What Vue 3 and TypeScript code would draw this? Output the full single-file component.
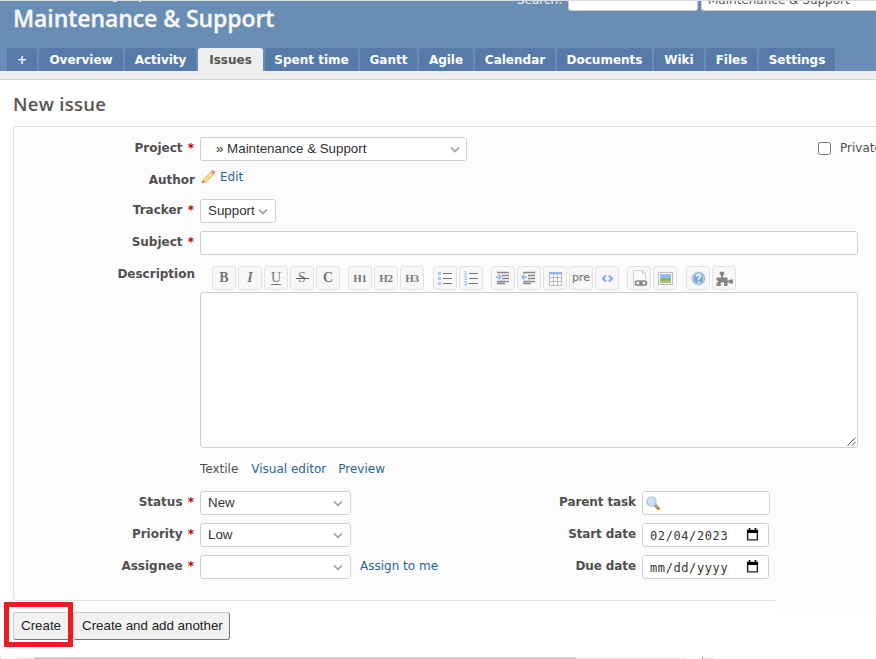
<script setup lang="ts">
interface Tab { label: string; width: number; active?: boolean }
interface Tool { text?: string; cls?: string; icon?: string; title: string }
interface SelectField { label: string; value: string }

const tabs: Tab[] = [
  { label: '+', width: 30 },
  { label: 'Overview', width: 84 },
  { label: 'Activity', width: 71 },
  { label: 'Issues', width: 65, active: true },
  { label: 'Spent time', width: 93 },
  { label: 'Gantt', width: 57 },
  { label: 'Agile', width: 54 },
  { label: 'Calendar', width: 80 },
  { label: 'Documents', width: 95 },
  { label: 'Wiki', width: 50 },
  { label: 'Files', width: 51 },
  { label: 'Settings', width: 76 },
]

const bullets = '<path d="M7 4.5h9M7 9.5h9M7 14.5h9" stroke="#777"/>'
const textLines = (arrow: string) =>
  '<path d="M3 3.5h12M8 6.5h7M8 9.5h7M3 12.500h12M3 14.500h8" stroke="#888" stroke-width="1.300"/><path d="' + arrow + '" stroke="#8fb7f0" stroke-width="1.600" fill="none"/>'

const icons: Record<string, string> = {
  ul: '<g fill="#a9c6f5"><circle cx="3.500" cy="4.500" r="1.700"/><circle cx="3.500" cy="9.500" r="1.700"/><circle cx="3.500" cy="14.500" r="1.700"/></g>' + bullets,
  ol: '<g stroke="#a9c6f5" fill="none"><path d="M2 2.500h1.500v3M2 5.500h3M2 7.500h2.500v1.500L2.500 10.500H5M2 12.500h2.500v3.500H2M2.500 14h2"/></g>' + bullets,
  indent: textLines('M2 8h5M4.500 5.500L7 8L4.500 10.500'),
  outdent: textLines('M2 8h5M4.500 5.500L2 8L4.500 10.500'),
  table: '<path d="M3 3h13v13H3z" fill="#fff"/><path d="M3.500 4v12.500h12V4M7.500 4v12M11.500 4v12M3 8.500h13M3 12.500h13" stroke="#bbb" fill="none"/><path d="M3 3h13v2.500H3z" fill="#8fb7f0"/>',
  code: '<path d="M8 6.500L5 9.500L8 12.500M11 6.500L14 9.500L11 12.500" stroke="#80b2ef" stroke-width="2.200" fill="none"/>',
  link: '<path d="M3.500 1.500h9l3 3v12h-12z" fill="#fafafa" stroke="#d0d0d0"/><path d="M12.500 1.500v3h3" fill="none" stroke="#d0d0d0"/><g fill="none" stroke="#888" stroke-width="1.700"><rect x="5.500" y="12" width="6" height="4" rx="2"/><rect x="10.500" y="12" width="6" height="4" rx="2"/><path d="M9 14h4"/></g>',
  image: '<rect x="2.500" y="3.500" width="14" height="12" fill="#fff" stroke="#bbb"/><path d="M4 5h11v9H4z" fill="#90bdee"/><path d="M4 10q4-2 6 0q3-2 5 0v4H4z" fill="#91b73d"/><path d="M4 12q5-2 11 0v2H4z" fill="#aac56a"/>',
  help: '<circle cx="9.500" cy="9.500" r="6.500" fill="#80a6d2" stroke="#b4c9e2"/><circle cx="9.500" cy="9.500" r="5.200" fill="none" stroke="#c4d8ed"/><path d="M7.500 7.800q0-2 2-2t2 1.800q0 1-2 2v1.200M9.500 12.200v1.500" fill="none" stroke="#fff" stroke-width="1.400"/>',
  macro: '<path d="M1.500 8.500H6V6.500Q4.500 5.500 4.500 4.300Q4.500 2.500 7 2.500Q9.500 2.500 9.500 4.300Q9.500 5.500 8 6.500V8.500H12.500V11.500H14Q14.500 10.500 15.500 10.500H18V14.500H15.500Q14.500 14.500 14 13.500H12.500V17H9V15.500Q9.500 15 9.500 14.300Q9.200 13.300 7.500 13.300Q5.800 13.300 5.500 14.300Q5.500 15 6 15.500V17H1.500V13.500H3V11.500H1.500z" fill="#858585"/>',
}

const toolGroups: Tool[][] = [
  [
    { text: 'B', title: 'Strong' },
    { text: 'I', cls: 'italic', title: 'Italic' },
    { text: 'U', cls: 'under', title: 'Underline' },
    { text: 'S', cls: 'strike', title: 'Deleted' },
    { text: 'C', title: 'Inline code' },
  ],
  [
    { text: 'H1', cls: 'head', title: 'Heading 1' },
    { text: 'H2', cls: 'head', title: 'Heading 2' },
    { text: 'H3', cls: 'head', title: 'Heading 3' },
  ],
  [{ icon: 'ul', title: 'Unordered list' }, { icon: 'ol', title: 'Ordered list' }],
  [
    { icon: 'indent', title: 'Quote' },
    { icon: 'outdent', title: 'Remove quote' },
    { icon: 'table', title: 'Table' },
    { text: 'pre', cls: 'pre', title: 'Preformatted text' },
    { icon: 'code', title: 'Highlighted code' },
  ],
  [{ icon: 'link', title: 'Link to a page' }, { icon: 'image', title: 'Image' }],
  [{ icon: 'help', title: 'Help' }, { icon: 'macro', title: 'Macro' }],
]

const attributes: SelectField[] = [
  { label: 'Status', value: 'New' },
  { label: 'Priority', value: 'Low' },
  { label: 'Assignee', value: '' },
]
const dates: SelectField[] = [
  { label: 'Start date', value: '02/04/2023' },
  { label: 'Due date', value: 'mm/dd/yyyy' },
]
</script>

<template>
  <div class="page">
    <header class="header">
      <div class="quick">
        <span class="quick-label">Search:</span>
        <span class="quick-input"></span>
        <span class="quick-jump">Maintenance &amp; Support</span>
      </div>
      <h1>Maintenance &amp; Support</h1>
      <nav class="tabs">
        <a v-for="t in tabs" :key="t.label" :class="['tab', { active: t.active }]" :style="{ width: t.width + 'px' }">{{ t.label }}</a>
      </nav>
      <i class="tail g"></i><i class="tail p"></i>
    </header>
    <div class="strip"></div>
    <h2>New issue</h2>

    <main class="box">
      <div class="row">
        <label>Project <i>*</i></label>
        <div class="control project"><span>» Maintenance &amp; Support</span><svg class="chev" viewBox="0 0 10 8"><path d="M1 1.500L5 5.500L9 1.500" /></svg></div>
        <div class="private"><span class="check"></span>Private</div>
      </div>
      <div class="row author">
        <label>Author</label>
        <svg class="pencil" viewBox="0 0 16 16">
          <path d="M1 14.500h10l-5-2z" fill="#e5e5e5" />
          <path d="M1.500 14l1.500-4l7.500-7.500l3 3L6 12.500z" fill="#f5d879" stroke="#d6a950" stroke-width=".8" />
          <path d="M4.500 11.500L12 4" stroke="#fff0b0" />
          <path d="M10 3l2-2.500q2.500 0 3.500 2.500l-2 2.500z" fill="#ee8c90" />
          <path d="M1 14.500l1-2.500l1.500 1.500z" fill="#555" />
        </svg>
        <a class="link">Edit</a>
      </div>
      <div class="row">
        <label>Tracker <i>*</i></label>
        <div class="control tracker"><span>Support</span><svg class="chev" viewBox="0 0 10 8"><path d="M1 1.500L5 5.500L9 1.500" /></svg></div>
      </div>
      <div class="row subject">
        <label>Subject <i>*</i></label>
        <div class="control wide"></div>
      </div>
      <div class="row description">
        <label>Description</label>
        <div class="editor">
          <div class="toolbar">
            <div v-for="(g, n) in toolGroups" :key="n" :class="['group', 'group-' + n]">
              <span v-for="t in g" :key="t.title" class="tool">
                <b v-if="t.text" :class="t.cls">{{ t.text }}</b>
                <svg v-else viewBox="0 0 19 19" v-html="icons[t.icon ?? '']"></svg>
              </span>
            </div>
          </div>
          <div class="area"><svg viewBox="0 0 9 9"><path d="M.5 8.500L8.500.5M5 8.500L8.500 5" /></svg></div>
          <div class="modes"><span>Textile</span><a class="link visual">Visual editor</a><a class="link">Preview</a></div>
        </div>
      </div>
      <div class="columns">
        <div class="column">
          <div v-for="f in attributes" :key="f.label" class="row">
            <label>{{ f.label }} <i>*</i></label>
            <div class="control attr"><span>{{ f.value }}</span><svg class="chev" viewBox="0 0 10 8"><path d="M1 1.500L5 5.500L9 1.500" /></svg></div>
            <a v-if="f.label === 'Assignee'" class="link assign">Assign to me</a>
          </div>
        </div>
        <div class="column right">
          <div class="row">
            <label>Parent task</label>
            <div class="control parent">
              <svg class="lens" viewBox="0 0 14 14"><path d="M9 9l3.500 3.500" stroke="#b97b3c" stroke-width="3" stroke-linecap="round" /><path d="M9.500 9l3 3" stroke="#e7bd83" /><circle cx="5.500" cy="5.500" r="4.700" fill="#c4dffa" stroke="#b3c4dc" stroke-width="1.200" /><path d="M3 5q0-2 2.500-2.500" stroke="#e5f2ff" fill="none" /></svg>
            </div>
          </div>
          <div v-for="d in dates" :key="d.label" class="row">
            <label>{{ d.label }}</label>
            <div class="control date"><span>{{ d.value }}</span><svg class="cal" viewBox="0 0 12 12"><path d="M1.500 2.500h9v8.500h-9z" fill="#fff" stroke="#222" stroke-width="1.300" /><path d="M1 1.500h10v3H1zM2.500 0h1.500v2H2.500zM8 0h1.500v2H8z" fill="#000" /></svg></div>
          </div>
        </div>
      </div>
    </main>

    <footer class="actions">
      <div class="spill"></div>
      <button class="create">Create</button>
      <button class="another">Create and add another</button>
      <div class="highlight"></div>
    </footer>
    <div class="edge"><i class="e1"></i><i class="e2"></i><i class="e3"></i><i class="e4"></i><i class="e5"></i><i class="e6"></i></div>
  </div>
</template>

<style>
body { margin: 0; background: #fff; overflow: hidden; }
</style>

<style scoped>
* { box-sizing: border-box; }
.page { width: 876px; height: 659px; overflow: hidden; position: relative; background: #fff; color: #505050; font: 12px/16px "DejaVu Sans", Verdana, sans-serif; }
.header { position: relative; height: 71px; background: #698eb5; border-top: 1px solid #dcdcdc; overflow: hidden; display: flex; flex-direction: column; justify-content: space-between; }
.quick { position: absolute; top: -11px; left: 517px; display: flex; color: #f4f6f8; }
.quick-label { width: 51px; line-height: 20px; }
.quick-input { width: 130px; height: 21px; background: #fff; border: 1px solid #ccc; border-radius: 3px; margin-right: 3px; }
.quick-jump { width: 190px; height: 21px; line-height: 18px; background: #fff; border: 1px solid #ccc; border-radius: 3px; color: #555; padding-left: 6px; white-space: nowrap; }
.tail { position: absolute; top: 0; height: 1px; background: #dfe7ef; }
.g { left: 113px; width: 4px; }
.p { left: 139px; width: 2px; }
h1 { margin: 0; padding: 0 0 0 13px; font: 600 23px/34px "Open Sans", sans-serif; letter-spacing: -0.080px; -webkit-text-stroke: .3px #f8f8f8; color: #f8f8f8; white-space: nowrap; }
.tabs { display: flex; gap: 2px; padding-left: 7px; height: 23px; }
.tab { flex: none; height: 23px; background: #577ba9; color: #fff; font-weight: bold; text-align: center; line-height: 24px; border-radius: 3px 3px 0 0; white-space: nowrap; }
.tab.active { background: #eee; color: #555; }
.strip { height: 9px; background: #eee; border-bottom: 1px solid #d4d4d4; }
h2 { margin: 0; height: 46px; padding: 10px 0 0 13px; font: 600 18.500px/28px "Open Sans", sans-serif; letter-spacing: .3px; color: #555; }
.box { margin-left: 13px; width: 880px; height: 475px; border: 1px solid #e2e2e2; border-radius: 3px; background: #fcfcfc; padding-top: 10px; }
.row { display: flex; height: 24px; margin-bottom: 8px; }
label { flex: none; width: 181px; margin-right: 5px; text-align: right; font-weight: bold; line-height: 22px; white-space: nowrap; }
label i { font-style: normal; color: #b00; margin: 0 1px; }
.control { flex: none; height: 24px; background: #fff; border: 1px solid #d0d0d0; border-radius: 3px; display: flex; justify-content: space-between; align-items: center; padding: 0 7px; color: #333; font: 13.333px/22px "Liberation Sans", Arial, sans-serif; white-space: nowrap; }
.chev { width: 10px; height: 8px; fill: none; stroke: #aaa; stroke-width: 1.800; margin-top: 1px; }
.project { width: 267px; padding: 0 6px 0 15px; }
.tracker { width: 76px; }
.wide { width: 658px; }
.private { margin-left: 351px; display: flex; line-height: 22px; }
.check { width: 13px; height: 13px; border: 1px solid #767676; border-radius: 2.500px; background: #fff; margin: 5px 9px 0 0; }
.author { height: 30px; margin-bottom: 0; }
.author label { align-self: flex-start; }
.pencil { width: 15px; height: 16px; margin: 0 4px 0 1px; }
.link { color: #2a6496; white-space: nowrap; }
.subject { margin-bottom: 11px; }
.description { height: 217px; margin-bottom: 8px; }
.description label { line-height: 16px; }
.editor { width: 658px; }
.toolbar { height: 26px; padding-left: 12px; display: flex; }
.group { display: flex; gap: 2px; margin-right: 8px; }
.group-1 { margin-right: 9px; }
.group-4 { margin-right: 9px; }
.tool { width: 24px; height: 24px; border: 1px solid #e3e3e3; border-radius: 3px; background: #f8f8f8; display: flex; align-items: center; justify-content: center; font-family: "Liberation Serif", serif; color: #777; }
.tool svg { width: 19px; height: 19px; }
.tool b { font-size: 14px; }
.tool .head { font-size: 11px; letter-spacing: -.2px; padding-bottom: 1px; }
.tool .italic { font-style: italic; }
.tool .under { font-weight: normal; text-decoration: underline; text-underline-offset: 2px; }
.tool .strike { position: relative; font-weight: normal; text-decoration: none; }
.tool .strike::after { content: ""; position: absolute; left: -2px; right: -3px; top: 8px; height: 1px; background: #666; }
.tool .pre { font: 11px/16px "DejaVu Sans", sans-serif; -webkit-text-stroke: .2px #777; padding-bottom: 1px; }
.area { height: 156px; background: #fff; border: 1px solid #d0d0d0; border-radius: 3px; display: flex; align-items: flex-end; justify-content: flex-end; }
.area svg { width: 9px; height: 9px; margin: 0 1px 1px 0; stroke: #555; fill: none; }
.modes { display: flex; padding-top: 13px; }
.visual { margin: 0 12px 0 13px; }
.columns { display: flex; }
.column { width: 442px; flex: none; }
.right label { width: 180px; margin-right: 6px; letter-spacing: -.1px; }
.attr { width: 151px; }
.assign { margin-left: 9px; line-height: 22px; }
.parent { width: 128px; padding-left: 3px; }
.lens { width: 14px; height: 14px; }
.date { width: 127px; font: 12px/22px "DejaVu Sans Mono", monospace; letter-spacing: .6px; padding: 1px 9px 0 7px; }
.cal { width: 13px; height: 13px; margin-top: -3px; }
.actions { position: relative; display: flex; padding: 11px 0 0 13px; height: 56px; gap: 3px; }
.spill { position: absolute; left: 775px; top: -1px; width: 101px; height: 18px; background: #fcfcfc; }
button { height: 28px; border: 1px solid #767676; border-top-color: #ccc; border-left-color: #ccc; border-radius: 3px; background: #f2f2f2; color: #222; font: 13.333px/20px "Liberation Sans", Arial, sans-serif; padding: 0 7px; text-align: left; white-space: nowrap; }
.create { width: 57px; }
.another { width: 157px; padding-left: 8px; }
.highlight { position: absolute; left: 4px; top: 1px; width: 69px; height: 45px; border: 5px solid #ed1c24; }
.edge { display: flex; height: 2px; }
.e1 { width: 1px; background: #ccc; }
.e2 { width: 17px; margin-left: 16px; background: #f0f0f0; }
.e3 { width: 542px; background: #bbb; border-top: 1px solid #ddd; }
.e4 { width: 110px; background: #f0f0f0; }
.e5 { width: 1px; margin-left: 16px; background: #aaa; }
.e6 { width: 12px; background: #eee; }
</style>
